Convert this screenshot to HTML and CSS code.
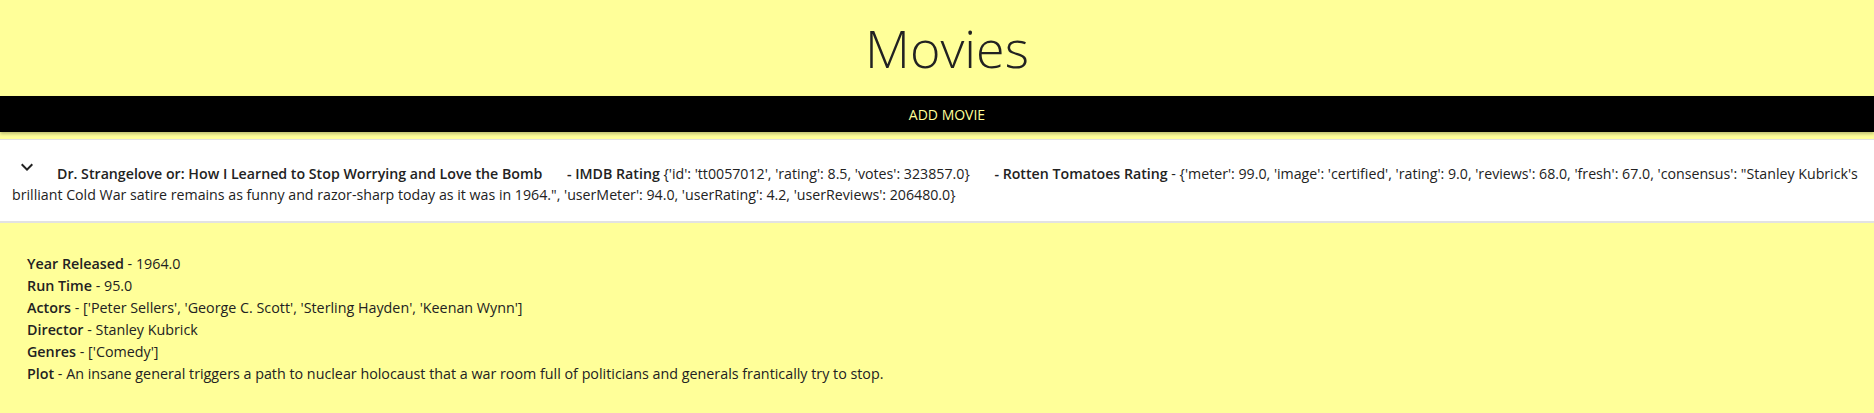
FILE: index.html
```
<!DOCTYPE html>
<html lang="en">
<head>
<meta charset="utf-8">
<title>Movies</title>
<link rel="stylesheet" href="styles.css">
</head>
<body>
<header class="header">
  <h1 class="title">Movies</h1>
</header>
<div class="add-bar"><span class="add-label">Add Movie</span></div>
<main class="list">
  <section class="movie">
    <div class="summary"><span class="toggle"><svg class="chev" viewBox="0 0 24 24" width="24" height="24"><path d="M16.59 8.59 12 13.17 7.41 8.59 6 10l6 6 6-6z" fill="#222"/></svg></span><b class="movie-title">Dr. Strangelove or: How I Learned to Stop Worrying and Love the Bomb</b> <span class="seg seg-imdb"><b>- IMDB Rating</b> {'id': 'tt0057012', 'rating': 8.5, 'votes': 323857.0}</span> <span class="seg"><b>- Rotten Tomatoes Rating</b> - {'meter': 99.0, 'image': 'certified', 'rating': 9.0, 'reviews': 68.0, 'fresh': 67.0, 'consensus': "Stanley Kubrick's brilliant Cold War satire remains as funny and razor-sharp today as it was in 1964.", 'userMeter': 94.0, 'userRating': 4.2, 'userReviews': 206480.0}</span></div>
    <div class="details">
      <div class="row"><b>Year Released</b> - 1964.0</div>
      <div class="row"><b>Run Time</b> - 95.0</div>
      <div class="row"><b>Actors</b> - ['Peter Sellers', 'George C. Scott', 'Sterling Hayden', 'Keenan Wynn']</div>
      <div class="row"><b>Director</b> - Stanley Kubrick</div>
      <div class="row"><b>Genres</b> - ['Comedy']</div>
      <div class="row"><b>Plot</b> - An insane general triggers a path to nuclear holocaust that a war room full of politicians and generals frantically try to stop.</div>
    </div>
  </section>
</main>
</body>
</html>
```
FILE: styles.css
```
html, body {
  margin: 0;
  padding: 0;
  background: #ffff99;
  font-family: "Open Sans", "Noto Sans", sans-serif;
  color: #222;
}
.header {
  padding: 22px 0 22px 20px;
  text-align: center;
}
.title {
  margin: 0;
  font-size: 52px;
  line-height: 52px;
  font-weight: 300;
  color: #222;
}
.add-bar {
  background: #000;
  height: 36px;
  line-height: 36px;
  padding-left: 20px;
  text-align: center;
  box-shadow: 0 2px 3px rgba(0, 0, 0, 0.25);
  position: relative;
}
.add-label {
  color: #ffff99;
  font-size: 14px;
  text-transform: uppercase;
}
.list {
  padding-top: 7px;
}
.summary {
  background: #fff;
  border-top: 1px solid #e2e2e2;
  border-bottom: 2px solid #e2e2e2;
  padding: 15px 4px 16px 12px;
  font-size: 14.2px;
  line-height: 21px;
  color: #222;
}
.summary b {
  font-weight: 600;
}
.toggle {
  display: inline-block;
  width: 24px;
  height: 24px;
  margin: 0 18px 0 3px;
  vertical-align: baseline;
}
.chev {
  display: block;
}
.movie-title {
  margin-right: 21px;
}
.seg-imdb {
  margin-right: 21px;
}
.details {
  padding: 30px 27px;
  font-size: 14.3px;
  line-height: 22px;
  color: #222;
}
.details b {
  font-weight: 600;
}
```
